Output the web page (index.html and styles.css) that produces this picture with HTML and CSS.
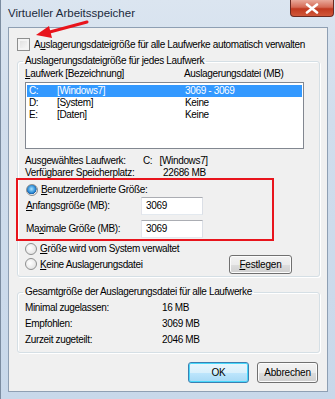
FILE: index.html
```html
<!DOCTYPE html>
<html lang="de">
<head>
<meta charset="utf-8">
<link rel="stylesheet" href="styles.css">
</head>
<body>
<div class="window">
  <div class="titlebar">
    <span class="title">Virtueller Arbeitsspeicher</span>
    <div class="close"><svg width="14" height="11" viewBox="0 0 14 11"><path d="M2 1.5 L12 9.5 M12 1.5 L2 9.5" stroke="#fff" stroke-width="2.6" stroke-linecap="round"/></svg></div>
  </div>
  <div class="client">
    <div class="check-row">
      <span class="checkbox"></span>
      <span>A<u>u</u>slagerungsdateigröße für alle Laufwerke automatisch verwalten</span>
    </div>
    <fieldset class="group group-drives">
      <legend>Auslagerungsdateigröße für jedes Laufwerk</legend>
      <div class="list-head">
        <span class="col-a"><u>L</u>aufwerk [Bezeichnung]</span>
        <span>Auslagerungsdatei (MB)</span>
      </div>
      <div class="listbox">
        <div class="row selected"><span class="drv">C:</span><span class="lbl">[Windows7]</span><span>3069 - 3069</span></div>
        <div class="row"><span class="drv">D:</span><span class="lbl">[System]</span><span>Keine</span></div>
        <div class="row"><span class="drv">E:</span><span class="lbl">[Daten]</span><span>Keine</span></div>
      </div>
      <div class="info">
        <div class="info-row"><span class="info-l">Ausgewähltes Laufwerk:</span><span>C:&nbsp;&nbsp;&nbsp;[Windows7]</span></div>
        <div class="info-row"><span class="info-l">Verfügbarer Speicherplatz:</span><span class="info-v">22686 MB</span></div>
      </div>
      <div class="highlight">
        <div class="radio-row"><span class="radio on"></span><span><u>B</u>enutzerdefinierte Größe:</span></div>
        <div class="field-row"><span class="field-l"><u>A</u>nfangsgröße (MB):</span><span class="textbox">3069</span></div>
        <div class="field-row second"><span class="field-l">Ma<u>x</u>imale Größe (MB):</span><span class="textbox">3069</span></div>
      </div>
      <div class="radio-row after"><span class="radio"></span><span><u>G</u>röße wird vom System verwaltet</span></div>
      <div class="last-row">
        <div class="radio-row"><span class="radio"></span><span><u>K</u>eine Auslagerungsdatei</span></div>
        <button class="btn set"><u>F</u>estlegen</button>
      </div>
    </fieldset>
    <fieldset class="group group-total">
      <legend>Gesamtgröße der Auslagerungsdatei für alle Laufwerke</legend>
      <div class="tot-row first"><span class="tot-l">Minimal zugelassen:</span><span>16 MB</span></div>
      <div class="tot-row"><span class="tot-l">Empfohlen:</span><span>3069 MB</span></div>
      <div class="tot-row"><span class="tot-l">Zurzeit zugeteilt:</span><span>2046 MB</span></div>
    </fieldset>
    <div class="buttons">
      <button class="btn default">OK</button>
      <button class="btn">Abbrechen</button>
    </div>
  </div>
  <svg class="arrow" width="60" height="24" viewBox="0 0 60 24"><path d="M53 3 L12 14" stroke="#e8141c" stroke-width="3" stroke-linecap="round"/><path d="M2 16 L15 7 L18 19 Z" fill="#e8141c"/></svg>
</div>
</body>
</html>
```
FILE: styles.css
```css
* { box-sizing: border-box; }
html, body { margin: 0; padding: 0; }
body {
  width: 335px; height: 399px; overflow: hidden;
  font-family: "Liberation Sans", Arial, sans-serif;
  font-size: 10px; color: #000;
  letter-spacing: -0.35px;
  white-space: nowrap;
}
.window {
  position: relative;
  width: 335px; height: 399px;
  background: linear-gradient(180deg, #dbe5f0 0%, #d0ddec 30%, #c8d8ea 100%);
  border-left: 1px solid #7b8ca0;
  padding: 0 7px 7px 7px;
  display: flex; flex-direction: column;
}
.titlebar {
  height: 27px; flex: none;
  display: flex; align-items: center; justify-content: space-between;
}
.title { font-size: 11.5px; letter-spacing: 0; color: #1b2a3c; margin-top: -1px; }
.close {
  width: 44px; height: 17px; margin-top: -10px; margin-right: -6px;
  border: 1px solid #6a2a22; border-top: none;
  border-radius: 0 0 4px 4px;
  background: linear-gradient(180deg, #e9a99a 0%, #d56a55 45%, #c1391f 55%, #d0583a 100%);
  display: flex; align-items: center; justify-content: center;
}
.client {
  flex: 1;
  background: #f0f0f0;
  border: 1px solid #8e9fb3;
  padding: 0 7px 0 8px;
  display: flex; flex-direction: column;
}
.check-row { display: flex; align-items: center; height: 13px; margin-top: 10px; gap: 4px; }
.checkbox {
  width: 13px; height: 13px; flex: none;
  border: 1px solid #8e8f8f;
  background: linear-gradient(135deg, #dcdcdc, #fbfbfb);
  box-shadow: inset 0 0 0 2px #f4f4f4;
}
.group {
  margin: 0; min-width: 0;
  border: 1px solid #d5dfe5; border-radius: 3px;
  box-shadow: inset 1px 1px 0 #fff, 1px 1px 0 #fff;
  padding: 0 15px 6px 7px;
}
.group legend { padding: 0 2px; margin-left: -2px; line-height: 12px; height: 12px; }
.group-drives { margin-top: 4px; padding-bottom: 3px; }
.list-head { display: flex; height: 12px; line-height: 12px; margin-top: 1px; }
.col-a { width: 159px; }
.listbox {
  margin-top: 2px; height: 67px;
  border: 1px solid #828790; background: #fff;
  padding: 2px 1px 0 1px;
}
.row { display: flex; height: 12px; line-height: 12px; padding-left: 2px; }
.row.selected { background: #3399ff; color: #fff; }
.drv { width: 28px; }
.lbl { width: 128px; }
.info { margin-top: 6px; }
.info-row { display: flex; height: 12px; line-height: 12px; }
.info-l { width: 118px; }
.info-v { margin-left: 20px; }
.highlight {
  margin: -1px 0 0 -9px; width: 258px;
  border: 2px solid #e8141c;
  padding: 3px 0 1px 8px;
}
.radio-row { display: flex; align-items: center; gap: 3px; height: 13px; }
.radio {
  width: 12px; height: 12px; border-radius: 50%; flex: none;
  border: 1px solid #8e8f8f;
  background: radial-gradient(circle at 40% 40%, #fff 0%, #e2e2e2 80%);
}
.radio.on {
  background: radial-gradient(circle at 45% 40%, #a8e1ff 0%, #2f8fd8 45%, #1a5fa8 60%, #e8e8e8 65%);
}
.field-row { display: flex; align-items: center; height: 19px; }
.field-row.second { margin-top: 4px; }
.field-l { width: 115px; }
.textbox {
  width: 62px; height: 18px;
  border: 1px solid; border-color: #abadb3 #dbdfe6 #e3e9ef #e2e3ea;
  background: #fff; padding-left: 4px; line-height: 16px;
}
.radio-row.after { margin-top: 1px; }
.last-row { display: flex; align-items: center; justify-content: space-between; margin-top: 0; height: 18px; }
.btn {
  font-family: inherit; font-size: 10px; color: #000; letter-spacing: -0.2px;
  border: 1px solid #707070; border-radius: 3px;
  background: linear-gradient(180deg, #f2f2f2 0%, #ebebeb 50%, #dddddd 51%, #cfcfcf 100%);
  box-shadow: inset 0 0 0 1px #fcfcfc;
  padding: 0; margin: 0;
}
.set { width: 63px; height: 19px; margin-right: 12px; }
.group-total { margin-top: 9px; padding-bottom: 4px; }
.tot-row { display: flex; height: 16px; line-height: 16px; }
.tot-row.first { margin-top: 2px; }
.tot-l { width: 137px; }
.buttons { display: flex; justify-content: flex-end; gap: 8px; margin-top: 9px; padding-right: 2px; }
.buttons .btn { width: 61px; height: 21px; }
.btn.default {
  border-color: #3c7fb1;
  background: linear-gradient(180deg, #eaf6fd 0%, #d9f0fc 50%, #bee6fd 51%, #a7d9f5 100%);
  box-shadow: inset 0 0 0 1px #48d8fb;
}
.arrow { position: absolute; left: 33px; top: 19px; }
```
